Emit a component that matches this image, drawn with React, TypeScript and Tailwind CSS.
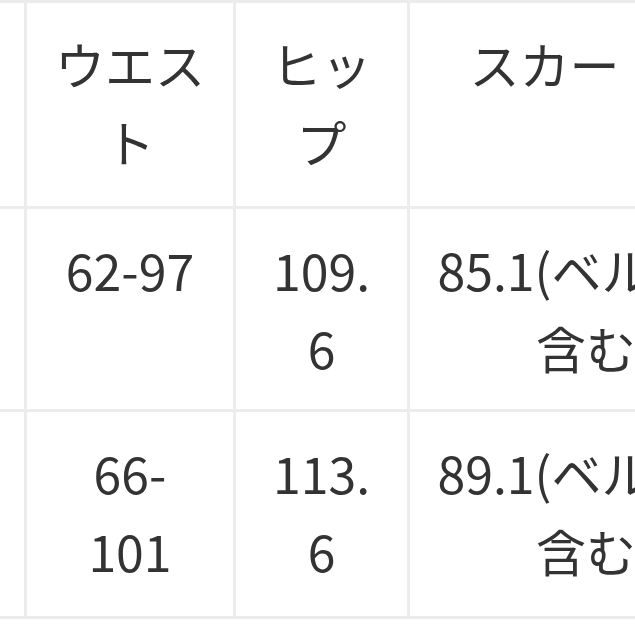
const font = { fontFamily: '"Noto Sans CJK JP", "Noto Sans", sans-serif' };

type Cell = string[];

const header: Cell[] = [[''], ['ウエス', 'ト'], ['ヒッ', 'プ'], ['スカート丈']];

const rows: Cell[][] = [
    [[''], ['62-97'], ['109.', '6'], ['85.1(ベルトを', '含む)']],
    [[''], ['66-', '101'], ['113.', '6'], ['89.1(ベルトを', '含む)']],
];

function Lines({ lines }: { lines: Cell }) {
    return (
        <>
            {lines.map((line, i) => (
                <div key={i}>{line || '\u00a0'}</div>
            ))}
        </>
    );
}

export default function App() {
    return (
        <div className="h-[635px] w-[635px] overflow-hidden bg-white" style={font}>
            <table className="w-[782px] table-fixed border-separate border-spacing-0 text-center text-[50px] leading-[78px] text-[#333333]">
                <colgroup>
                    <col className="w-[27px]" />
                    <col className="w-[209px]" />
                    <col className="w-[174px]" />
                    <col className="w-[372px]" />
                </colgroup>
                <tbody>
                    <tr className="h-[209px]">
                        {header.map((cell, i) => (
                            <td
                                key={i}
                                className="border-t-[3px] border-r-[3px] border-b-[3px] border-[#ececec] px-2 pt-[21px] align-top"
                            >
                                <Lines lines={cell} />
                            </td>
                        ))}
                    </tr>
                    {rows.map((row, r) => (
                        <tr key={r} className={r === 0 ? 'h-[203px]' : 'h-[207px]'}>
                            {row.map((cell, i) => (
                                <td
                                    key={i}
                                    className="border-r-[3px] border-b-[3px] border-[#ececec] px-2 pt-[21px] align-top"
                                >
                                    <Lines lines={cell} />
                                </td>
                            ))}
                        </tr>
                    ))}
                </tbody>
            </table>
        </div>
    );
}
